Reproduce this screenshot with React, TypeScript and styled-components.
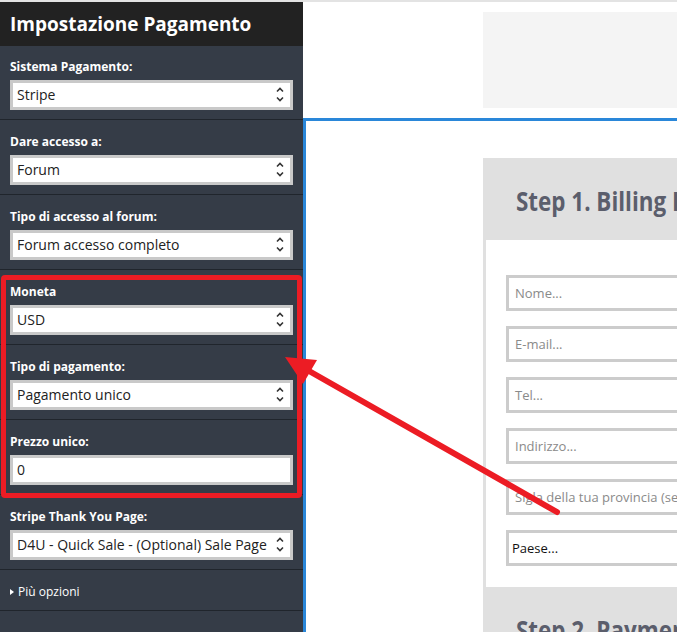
import React from "react";
import styled, { createGlobalStyle } from "styled-components";

const Global = createGlobalStyle`
  html, body {
    margin: 0;
    padding: 0;
    width: 677px;
    height: 632px;
    overflow: hidden;
    background: #ffffff;
  }
  body {
    font-family: "Open Sans", "Liberation Sans", sans-serif;
  }
  * { box-sizing: border-box; }
`;

const Page = styled.div`
  position: relative;
  width: 677px;
  height: 632px;
  overflow: hidden;
  display: flex;
  flex-direction: column;
`;

const TopRule = styled.div`
  height: 2px;
  background: #e3e3e3;
  flex-shrink: 0;
`;

const Layout = styled.div`
  flex: 1;
  display: flex;
  min-height: 0;
`;

const Sidebar = styled.aside`
  width: 303px;
  flex-shrink: 0;
  background: #353c47;
  display: flex;
  flex-direction: column;
`;

const SidebarTitle = styled.h1`
  margin: 0;
  height: 44px;
  background: #222222;
  color: #ffffff;
  font-size: 19px;
  font-weight: 700;
  line-height: 44px;
  padding-left: 10px;
`;

const Section = styled.div<{ $first?: boolean }>`
  padding: ${(p) => (p.$first ? "12px" : "13px")} 10px 9px 10px;
  border-bottom: 1px solid #20252c;
`;

const Label = styled.div`
  color: #ffffff;
  font-size: 12px;
  font-weight: 700;
  line-height: 17px;
  margin-bottom: 5px;
`;

const SelectBox = styled.div`
  height: 30px;
  width: 283px;
  background: #ffffff;
  border: 3px solid #c9c9c9;
  display: flex;
  align-items: center;
  justify-content: space-between;
  padding: 0 6px 0 4px;
  font-size: 14px;
  line-height: 24px;
  color: #222222;
  white-space: nowrap;
  overflow: hidden;
`;

const Chevrons = styled.svg`
  flex-shrink: 0;
  display: block;
`;

const MoreRow = styled.div`
  padding: 14px 10px 11px 10px;
  border-bottom: 1px solid #20252c;
  display: flex;
  align-items: center;
  gap: 4px;
  color: #ffffff;
  font-size: 12px;
  line-height: 15px;
`;

const Caret = styled.span`
  width: 0;
  height: 0;
  border-left: 4px solid #ffffff;
  border-top: 3.5px solid transparent;
  border-bottom: 3.5px solid transparent;
`;

const Main = styled.main`
  flex: 1;
  min-width: 0;
  overflow: hidden;
  display: flex;
  flex-direction: column;
`;

const TopArea = styled.div`
  height: 116px;
  flex-shrink: 0;
  padding: 10px 0 0 180px;
`;

const GrayBox = styled.div`
  width: 420px;
  height: 96px;
  background: #f4f4f4;
`;

const Content = styled.div`
  flex: 1;
  border-top: 3px solid #2a87d9;
  border-left: 3px solid #2a87d9;
  padding: 37px 0 0 177px;
`;

const Card = styled.div`
  width: 440px;
  background: #e0e0e0;
`;

const StepHeader = styled.div`
  height: 82px;
  padding: 25px 0 0 33px;
  white-space: nowrap;
`;

const StepTitle = styled.h2`
  margin: 0;
  display: inline-block;
  font-size: 27px;
  line-height: 36px;
  font-weight: 700;
  color: #5b5e6c;
  transform: scaleX(0.83);
  transform-origin: left center;
`;

const FormBody = styled.div`
  margin-left: 3px;
  background: #ffffff;
  padding: 35px 0 21px 20px;
  display: flex;
  flex-direction: column;
  gap: 15px;
`;

const Field = styled.div<{ $filled?: boolean }>`
  height: 36px;
  width: 400px;
  border: 3px solid #cccccc;
  display: flex;
  align-items: center;
  padding-left: ${(p) => (p.$filled ? "3px" : "6px")};
  font-size: 13px;
  color: ${(p) => (p.$filled ? "#111111" : "#8a8a8a")};
  white-space: nowrap;
  overflow: hidden;
`;

const RedFrame = styled.div`
  position: absolute;
  left: 1px;
  top: 275px;
  width: 301px;
  height: 223px;
  border: 5px solid #ec1c24;
  border-radius: 4px;
  pointer-events: none;
`;

const ArrowLayer = styled.svg`
  position: absolute;
  left: 0;
  top: 0;
  pointer-events: none;
`;

const SelectChevrons = () => (
  <Chevrons width="8" height="24" viewBox="0 0 8 24">
    <path d="M1 8.5 L4 5.5 L7 8.5" fill="none" stroke="#333" strokeWidth="1.6" />
    <path d="M1 14.5 L4 17.5 L7 14.5" fill="none" stroke="#333" strokeWidth="1.6" />
  </Chevrons>
);

const Select = ({ value }: { value: string }) => (
  <SelectBox>
    <span>{value}</span>
    <SelectChevrons />
  </SelectBox>
);

type Item = { label: string; value: string; input?: boolean };

const items: Item[] = [
  { label: "Sistema Pagamento:", value: "Stripe" },
  { label: "Dare accesso a:", value: "Forum" },
  { label: "Tipo di accesso al forum:", value: "Forum accesso completo" },
  { label: "Moneta", value: "USD" },
  { label: "Tipo di pagamento:", value: "Pagamento unico" },
  { label: "Prezzo unico:", value: "0", input: true },
  { label: "Stripe Thank You Page:", value: "D4U - Quick Sale - (Optional) Sale Page" },
];

const fields = ["Nome...", "E-mail...", "Tel...", "Indirizzo...", "Sigla della tua provincia (se applicabile)..."];

export default function App() {
  return (
    <>
      <Global />
      <Page>
        <TopRule />
        <Layout>
          <Sidebar>
            <SidebarTitle>Impostazione Pagamento</SidebarTitle>
            {items.map((it, i) => (
              <Section key={it.label} $first={i === 0}>
                <Label>{it.label}</Label>
                {it.input ? (
                  <SelectBox>
                    <span>{it.value}</span>
                  </SelectBox>
                ) : (
                  <Select value={it.value} />
                )}
              </Section>
            ))}
            <MoreRow>
              <Caret />
              <span>Più opzioni</span>
            </MoreRow>
          </Sidebar>
          <Main>
            <TopArea>
              <GrayBox />
            </TopArea>
            <Content>
              <Card>
                <StepHeader>
                  <StepTitle>Step 1. Billing Information</StepTitle>
                </StepHeader>
                <FormBody>
                  {fields.map((f) => (
                    <Field key={f}>{f}</Field>
                  ))}
                  <Field $filled>Paese...</Field>
                </FormBody>
                <StepHeader>
                  <StepTitle>Step 2. Payment Information</StepTitle>
                </StepHeader>
              </Card>
            </Content>
          </Main>
        </Layout>
        <RedFrame />
        <ArrowLayer width="677" height="632" viewBox="0 0 677 632">
          <line x1="557" y1="512" x2="302" y2="367" stroke="#ec1c24" strokeWidth="6" strokeLinecap="round" />
          <polygon points="285,357 317,360 303,384" fill="#ec1c24" />
        </ArrowLayer>
      </Page>
    </>
  );
}
